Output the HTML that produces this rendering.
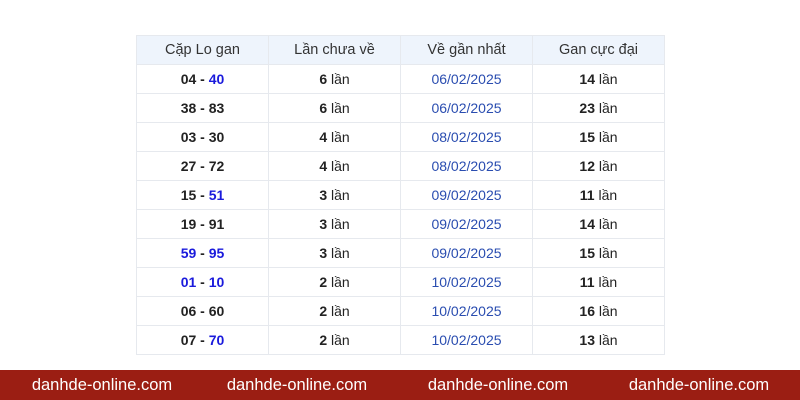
<!DOCTYPE html>
<html><head><style>
body{margin:0;width:800px;height:400px;background:#fff;font-family:"Liberation Sans",Arial,sans-serif;position:relative;overflow:hidden}
table{position:absolute;left:136px;top:35px;border-collapse:collapse;width:529px;table-layout:fixed}
td,th{border:1px solid #e6e9ee;height:28px;padding:0;text-align:center;font-size:14px;color:#222}
th{background:#eef4fc;font-weight:normal;color:#333;font-size:14.5px}
td b{font-weight:bold}
.bl{color:#1a1adc}
.d{color:#2a4db0}
.f{position:absolute;left:0;top:370px;width:800px;height:30px;background:#9b1e13;color:#fff;font-size:16.5px}
.f span{position:absolute;top:6px;transform:translateX(-50%);white-space:nowrap}
</style></head><body>
<table>
<tr><th>Cặp Lo gan</th><th>Lần chưa về</th><th>Về gần nhất</th><th>Gan cực đại</th></tr>
<tr><td><b>04 - <span class="bl">40</span></b></td><td><b>6</b> lần</td><td class="d">06/02/2025</td><td><b>14</b> lần</td></tr>
<tr><td><b>38 - 83</b></td><td><b>6</b> lần</td><td class="d">06/02/2025</td><td><b>23</b> lần</td></tr>
<tr><td><b>03 - 30</b></td><td><b>4</b> lần</td><td class="d">08/02/2025</td><td><b>15</b> lần</td></tr>
<tr><td><b>27 - 72</b></td><td><b>4</b> lần</td><td class="d">08/02/2025</td><td><b>12</b> lần</td></tr>
<tr><td><b>15 - <span class="bl">51</span></b></td><td><b>3</b> lần</td><td class="d">09/02/2025</td><td><b>11</b> lần</td></tr>
<tr><td><b>19 - 91</b></td><td><b>3</b> lần</td><td class="d">09/02/2025</td><td><b>14</b> lần</td></tr>
<tr><td><b><span class="bl">59</span> - <span class="bl">95</span></b></td><td><b>3</b> lần</td><td class="d">09/02/2025</td><td><b>15</b> lần</td></tr>
<tr><td><b><span class="bl">01</span> - <span class="bl">10</span></b></td><td><b>2</b> lần</td><td class="d">10/02/2025</td><td><b>11</b> lần</td></tr>
<tr><td><b>06 - 60</b></td><td><b>2</b> lần</td><td class="d">10/02/2025</td><td><b>16</b> lần</td></tr>
<tr><td><b>07 - <span class="bl">70</span></b></td><td><b>2</b> lần</td><td class="d">10/02/2025</td><td><b>13</b> lần</td></tr>
</table>
<div class="f"><span style="left:102px">danhde-online.com</span><span style="left:297px">danhde-online.com</span><span style="left:498px">danhde-online.com</span><span style="left:699px">danhde-online.com</span></div>
</body></html>
